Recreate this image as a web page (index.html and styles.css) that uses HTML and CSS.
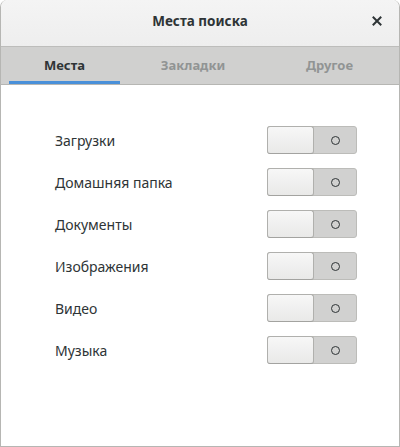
FILE: index.html
```html
<!DOCTYPE html>
<html lang="ru">
<head>
<meta charset="utf-8">
<link rel="stylesheet" href="styles.css">
</head>
<body>
<div class="window">
  <header class="headerbar">
    <div class="title">Места поиска</div>
    <button class="close" aria-label="Закрыть">
      <svg width="10" height="10" viewBox="0 0 10 10"><path d="M1.5 1.5 L8.5 8.5 M8.5 1.5 L1.5 8.5" stroke="#2e3436" stroke-width="2" stroke-linecap="square"/></svg>
    </button>
  </header>
  <nav class="tabs">
    <div class="tab tab-1 active">Места</div>
    <div class="tab tab-2">Закладки</div>
    <div class="tab tab-3">Другое</div>
  </nav>
  <main class="content">
    <div class="row"><span class="label">Загрузки</span><span class="switch"><span class="slider"></span><span class="off"></span></span></div>
    <div class="row"><span class="label">Домашняя папка</span><span class="switch"><span class="slider"></span><span class="off"></span></span></div>
    <div class="row"><span class="label">Документы</span><span class="switch"><span class="slider"></span><span class="off"></span></span></div>
    <div class="row"><span class="label">Изображения</span><span class="switch"><span class="slider"></span><span class="off"></span></span></div>
    <div class="row"><span class="label">Видео</span><span class="switch"><span class="slider"></span><span class="off"></span></span></div>
    <div class="row"><span class="label">Музыка</span><span class="switch"><span class="slider"></span><span class="off"></span></span></div>
  </main>
</div>
</body>
</html>
```
FILE: styles.css
```css
* { box-sizing: border-box; }
html, body { margin: 0; padding: 0; background: #ffffff; }
body { font-family: "Noto Sans", "DejaVu Sans", sans-serif; color: #2e3436; }
.window {
  width: 400px;
  height: 447px;
  display: flex;
  flex-direction: column;
  border: 1px solid #b6b6b3;
  border-top: none;
  border-radius: 7px 7px 0 0;
  overflow: hidden;
}
.headerbar {
  height: 47px;
  flex: none;
  background: linear-gradient(#f4f4f4, #eeeeee);
  border-bottom: 1px solid #bdbdbb;
  display: flex;
  align-items: center;
  justify-content: center;
  position: relative;
  border-radius: 7px 7px 0 0;
}
.title { font-size: 13.5px; font-weight: bold; color: #2e3436; margin-top: -4px; }
.close {
  position: absolute;
  right: 16px;
  top: 15px;
  width: 12px;
  height: 12px;
  padding: 0;
  border: none;
  background: none;
  display: flex;
  align-items: center;
  justify-content: center;
}
.tabs {
  height: 38px;
  flex: none;
  background: #d0d0cf;
  border-bottom: 1px solid #b6b6b3;
  display: flex;
  padding-left: 8px;
  gap: 9px;
}
.tab {
  font-size: 13px;
  font-weight: bold;
  color: #919494;
  display: flex;
  align-items: center;
  justify-content: center;
  padding-top: 2px;
  border-bottom: 3px solid transparent;
}
.tab-1 { width: 111px; }
.tab-2 { width: 128px; }
.tab-3 { width: 127px; }
.tab.active { color: #2e3436; border-bottom-color: #4a90d9; }
.content {
  flex: 1;
  background: #ffffff;
  padding: 41px 42px 0 54px;
  display: flex;
  flex-direction: column;
  gap: 14px;
}
.row {
  height: 28px;
  display: flex;
  align-items: center;
  justify-content: space-between;
}
.label { font-size: 14px; color: #2e3436; }
.switch {
  width: 90px;
  height: 28px;
  display: flex;
  border: 1px solid #bcbcb9;
  border-radius: 3px;
  background: #d1d1d0;
  position: relative;
}
.slider {
  width: 47px;
  height: 28px;
  margin: -1px 0 0 -1px;
  border: 1px solid #b0b0ad;
  border-bottom-color: #a3a3a0;
  border-radius: 3px;
  background: linear-gradient(#f7f7f7, #e9e9e8);
}
.off {
  flex: 1;
  display: flex;
  align-items: center;
  justify-content: center;
}
.off::before {
  content: "";
  width: 7px;
  height: 7px;
  border: 1.4px solid #2e3436;
  border-radius: 50%;
}
```
